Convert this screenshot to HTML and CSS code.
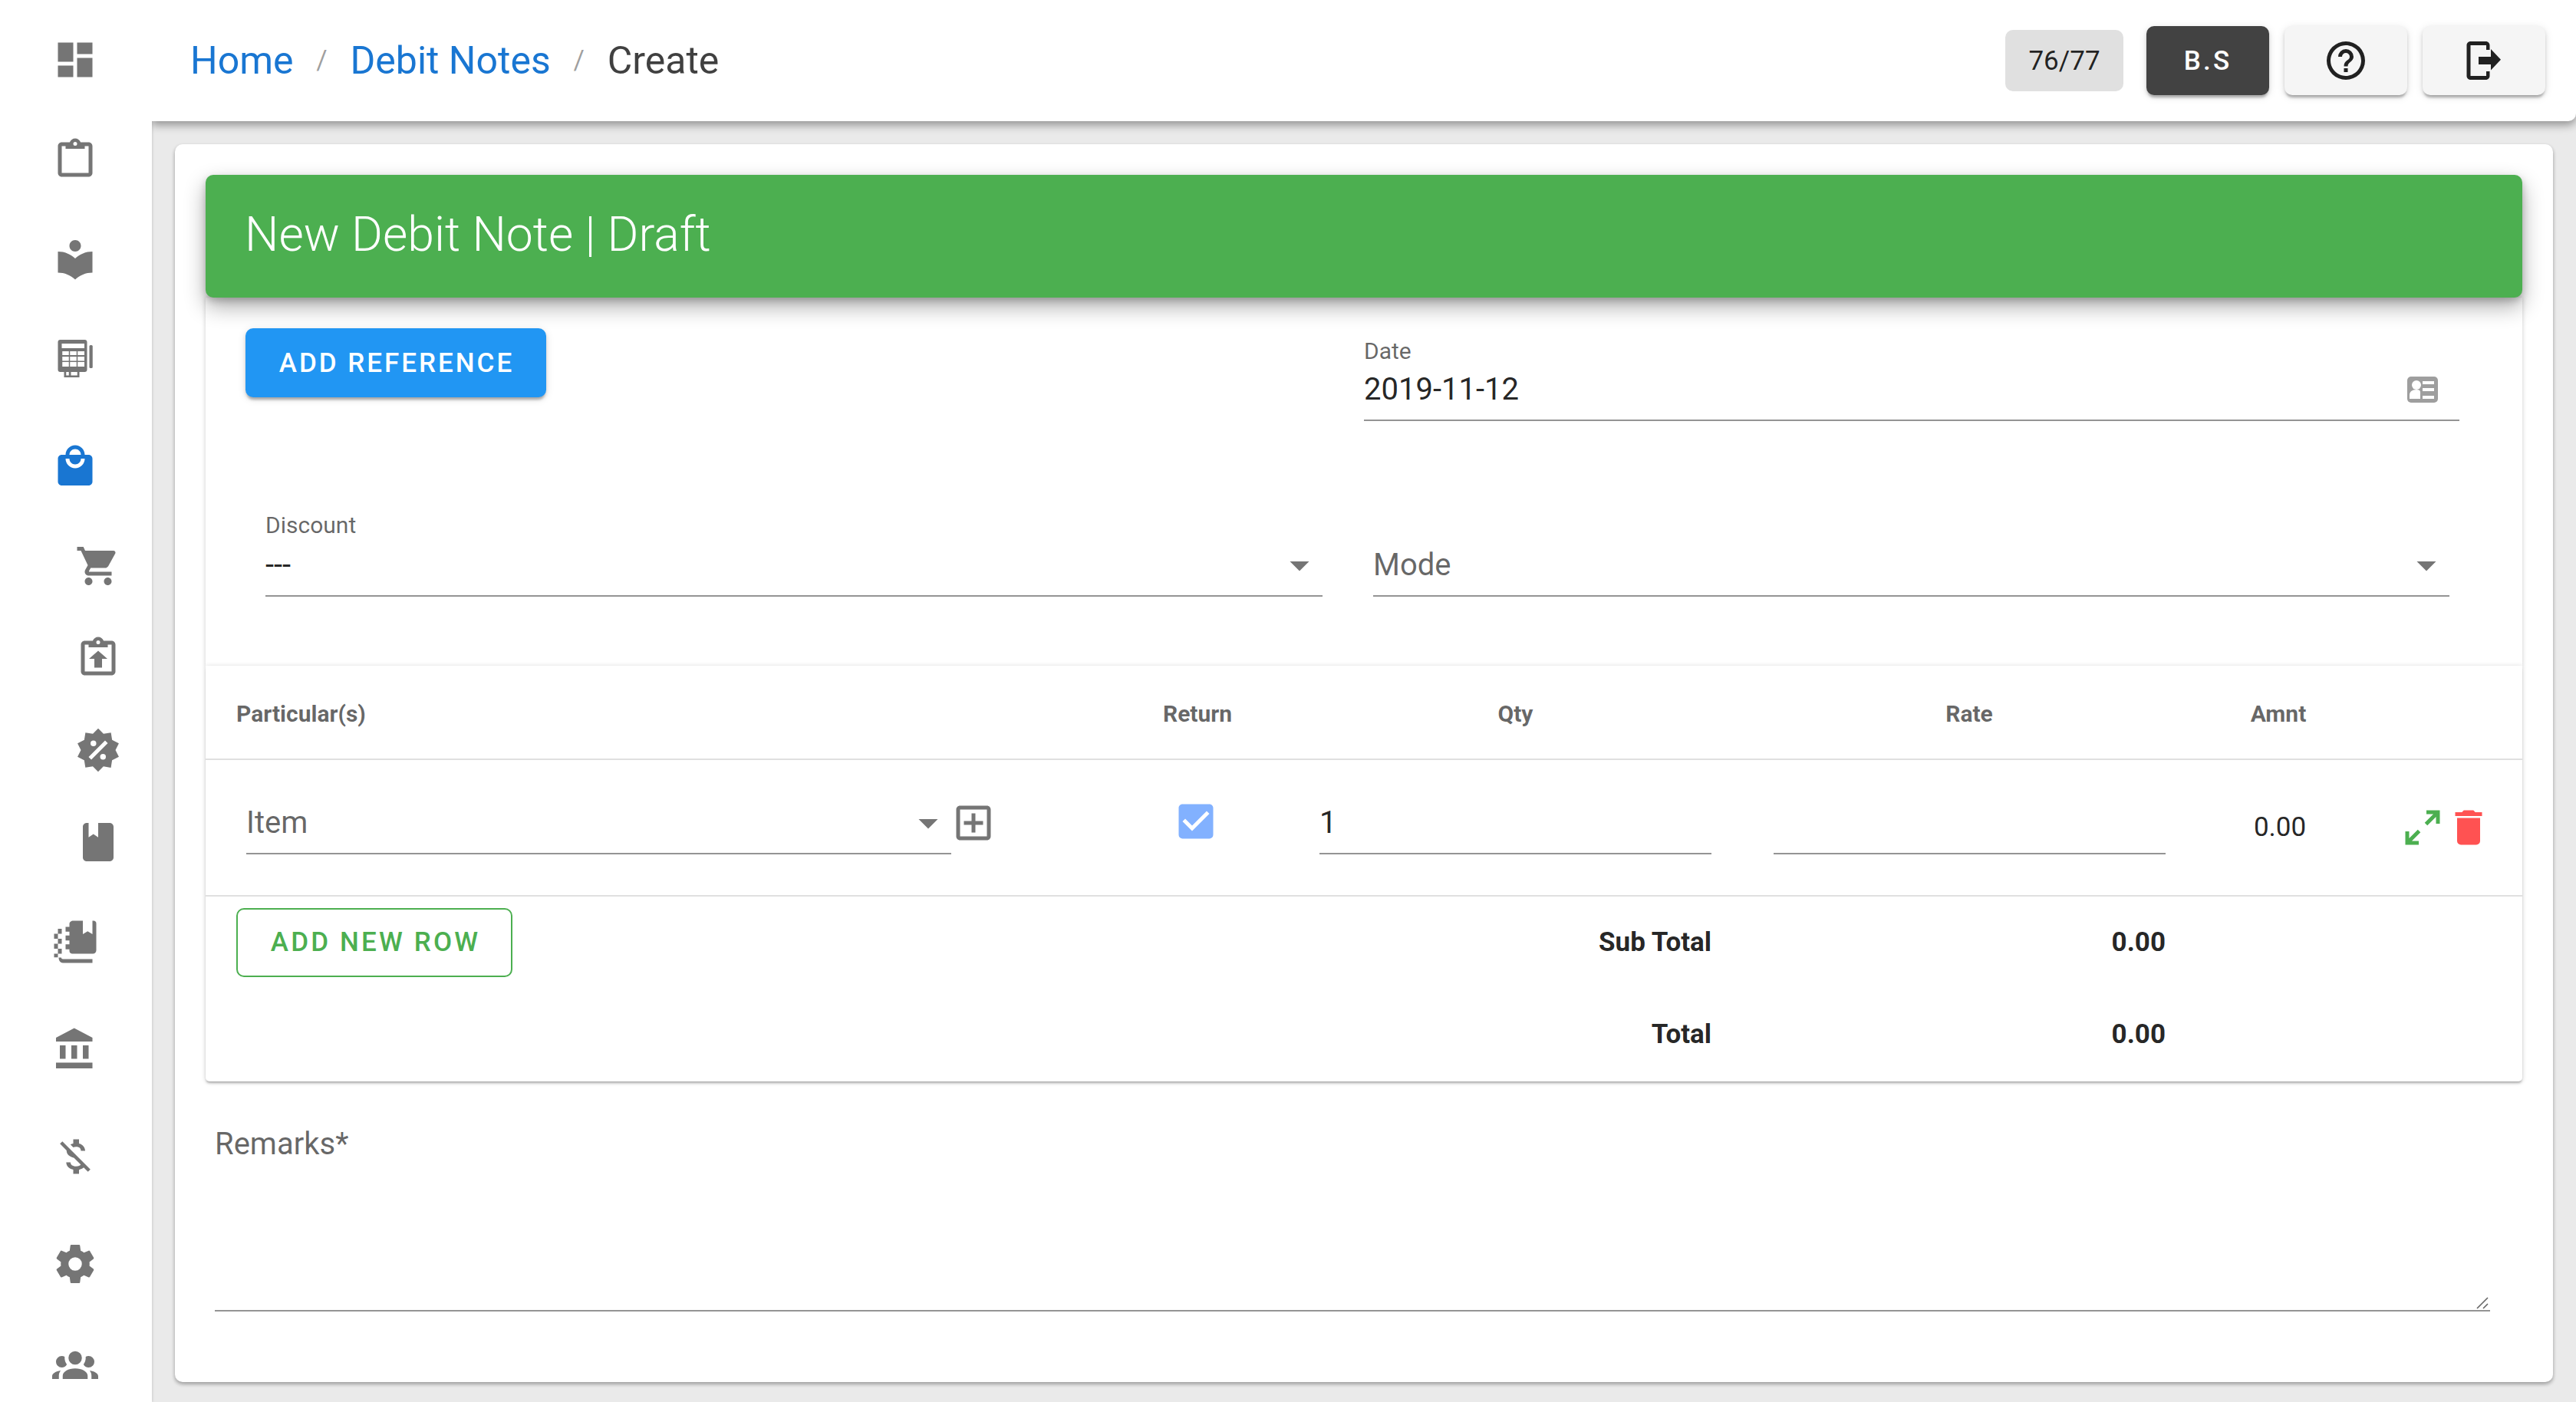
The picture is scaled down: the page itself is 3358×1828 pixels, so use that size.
FILE: index.html
```html
<!DOCTYPE html>
<html lang="en">
<head>
<meta charset="utf-8">
<title>New Debit Note</title>
<link rel="stylesheet" href="styles.css">
</head>
<body>
<div class="app">
  <nav class="sidebar">
    <svg class="ico nav first" viewBox="0 0 24 24"><path d="M3 13h8V3H3v10zm0 8h8v-6H3v6zm10 0h8V11h-8v10zm0-18v6h8V3h-8z"/></svg>
    <svg class="ico nav" viewBox="0 0 24 24"><path fill-rule="evenodd" d="M19 3h-4.18C14.4 1.84 13.3 1 12 1s-2.4.84-2.82 2H5c-1.1 0-2 .9-2 2v14c0 1.1.9 2 2 2h14c1.1 0 2-.9 2-2V5c0-1.1-.9-2-2-2zM12 2.8a1 1 0 1 1 0 2 1 1 0 0 1 0-2zM5 5h2v1.4h10V5h2v14H5z"/></svg>
    <svg class="ico nav" viewBox="0 0 24 24"><path d="M12 11.55C9.64 9.35 6.48 8 3 8v11c3.48 0 6.64 1.35 9 3.55 2.36-2.19 5.52-3.55 9-3.55V8c-3.48 0-6.64 1.35-9 3.55zM12 8c1.66 0 3-1.34 3-3s-1.34-3-3-3-3 1.34-3 3 1.34 3 3 3z"/></svg>
    <svg class="ico nav" viewBox="0 0 24 24"><path fill-rule="evenodd" d="M4.2 2h12.8c.7 0 1.2.5 1.2 1.2v14.4c0 .7-.5 1.2-1.2 1.2h-2.8v2.8H6.200v-2.800H4.200c-.7 0-1.200-.5-1.200-1.200V3.200C3 2.500 3.500 2 4.200 2zM5 4v2.400h11.800V4zM5.300 8v2h3.400V8zM9.300 8v2h3.400V8zM13.300 8v2h3.500V8zM5.300 10.800v2.200h3.400v-2.200zM9.300 10.800v2.200h3.400v-2.200zM13.300 10.800v2.200h3.500v-2.200zM5.300 13.600V16h3.400v-2.400zM9.300 13.600V16h3.400v-2.400zM13.300 13.600V16h3.500v-2.400zM7.300 18.800v1.800h1.400v-1.800zM9.800 18.800v1.800h3.300v-1.800z"/><rect x="19.400" y="4.800" width="1.700" height="12" rx=".6"/></svg>
    <svg class="ico nav wide active" viewBox="0 0 24 24"><path d="M19 6h-2c0-2.760-2.240-5-5-5S7 3.240 7 6H5c-1.100 0-1.990.9-1.990 2L3 20c0 1.100.9 2 2 2h14c1.100 0 2-.9 2-2V8c0-1.100-.9-2-2-2zm-7-3c1.660 0 3 1.340 3 3H9c0-1.660 1.340-3 3-3zm0 10c-2.760 0-5-2.240-5-5h2c0 1.660 1.340 3 3 3s3-1.340 3-3h2c0 2.760-2.240 5-5 5z"/></svg>
    <svg class="ico nav sub" viewBox="0 0 24 24"><path d="M7 18c-1.100 0-1.990.9-1.990 2S5.900 22 7 22s2-.9 2-2-.9-2-2-2zM1 2v2h2l3.600 7.590-1.350 2.450c-.16.28-.25.61-.25.96 0 1.100.9 2 2 2h12v-2H7.420c-.14 0-.25-.11-.25-.25l.03-.12.9-1.630h7.450c.75 0 1.410-.41 1.750-1.030l3.580-6.470c.08-.14.12-.31.12-.48 0-.55-.45-1-1-1H5.210l-.94-2H1zm16 16c-1.100 0-1.990.9-1.990 2s.89 2 1.990 2 2-.9 2-2-.9-2-2-2z"/></svg>
    <svg class="ico nav sub tight" viewBox="0 0 24 24"><path fill-rule="evenodd" d="M19 3h-4.180C14.400 1.840 13.300 1 12 1s-2.400.84-2.820 2H5c-1.100 0-2 .9-2 2v14c0 1.100.9 2 2 2h14c1.100 0 2-.9 2-2V5c0-1.100-.9-2-2-2zM12 2.800a1 1 0 1 1 0 2 1 1 0 0 1 0-2zM5 5h2v1.400h10V5h2v14H5zM12 8.200l-4.800 4.200h2.800V17h4v-4.600h2.800z"/></svg>
    <svg class="ico nav sub tight" viewBox="0 0 24 24"><path d="M18.650 2.850L19.260 6.710L22.770 8.500L21 12L22.780 15.500L19.240 17.290L18.630 21.150L14.740 20.540L11.970 23.300L9.190 20.500L5.330 21.140L4.710 17.250L1.220 15.470L3 11.970L1.230 8.500L4.740 6.690L5.350 2.860L9.220 3.500L12 .69L14.770 3.460L18.650 2.850M9.500 7A1.500 1.500 0 0 0 8 8.500A1.500 1.500 0 0 0 9.500 10A1.500 1.500 0 0 0 11 8.500A1.500 1.500 0 0 0 9.500 7M14.500 14A1.500 1.500 0 0 0 13 15.500A1.500 1.500 0 0 0 14.500 17A1.500 1.500 0 0 0 16 15.500A1.500 1.500 0 0 0 14.500 14M8.410 17L17 8.410L15.590 7L7 15.590L8.410 17Z"/></svg>
    <svg class="ico nav sub tight" viewBox="0 0 24 24"><path d="M18 2h-6v7.500l-2.500-1.700L7 9.500V2H6c-1.100 0-2 .9-2 2v16c0 1.100.9 2 2 2h12c1.100 0 2-.9 2-2V4c0-1.100-.9-2-2-2z"/></svg>
    <svg class="ico nav" viewBox="0 0 24 24"><path d="M11 1h5v7l2.500-1.500L21 8V1h.6c.8 0 1.400.6 1.400 1.400v14c0 1-.7 1.800-1.800 1.800H10.500c-.8 0-1.500-.6-1.500-1.400v-.9H7V13.300h2v-2H7V8.700h2v-2H7V4.200h2V2.600C9 1.700 9.900 1 11 1zM3 5.200h2v2.600H3zM1 7.800h2v2.600H1zM3 10.400h2V13H3zM1 13h2v2.600H1zM3 15.600h2v2.600H3zM1 18.200h2v1.900H1zM3.400 20.200h1.300c.1.500.4.800.9.800H21v2H5.600c-1.300 0-2.200-1.200-2.200-2.800z"/></svg>
    <svg class="ico nav wide" viewBox="0 0 24 24"><path d="M4 10v7h3v-7H4zm6 0v7h3v-7h-3zM2 22h19v-3H2v3zm14-12v7h3v-7h-3zm-4.500-9L2 6v2h19V6l-9.500-5z"/></svg>
    <svg class="ico nav wide" viewBox="0 0 24 24"><path d="M12.500 6.900c1.780 0 2.440.85 2.500 2.100h2.210c-.07-1.720-1.120-3.300-3.210-3.810V3h-3v2.160c-.53.12-1.030.3-1.480.54l1.470 1.470c.41-.17.91-.27 1.510-.27zM5.330 4.060L4.060 5.330 7.500 8.770c0 2.080 1.560 3.210 3.910 3.910l3.510 3.510c-.34.48-1.050.91-2.420.91-2.060 0-2.870-.92-2.980-2.100h-2.200c.12 2.190 1.760 3.420 3.680 3.830V21h3v-2.150c.96-.18 1.820-.55 2.450-1.120l2.220 2.220 1.270-1.270L5.330 4.060z"/></svg>
    <svg class="ico nav wide" viewBox="0 0 24 24"><path d="M12 15.500A3.500 3.500 0 0 1 8.500 12A3.500 3.500 0 0 1 12 8.500A3.500 3.500 0 0 1 15.500 12A3.500 3.500 0 0 1 12 15.500M19.430 12.970C19.470 12.650 19.500 12.330 19.500 12C19.500 11.670 19.470 11.340 19.430 11L21.540 9.370C21.730 9.220 21.780 8.950 21.660 8.730L19.660 5.270C19.540 5.050 19.270 4.960 19.050 5.050L16.560 6.050C16.040 5.660 15.500 5.320 14.870 5.070L14.500 2.420C14.460 2.180 14.250 2 14 2H10C9.750 2 9.540 2.180 9.500 2.420L9.130 5.070C8.500 5.320 7.960 5.660 7.440 6.050L4.950 5.050C4.730 4.960 4.460 5.050 4.340 5.270L2.340 8.730C2.210 8.950 2.270 9.220 2.460 9.370L4.570 11C4.530 11.340 4.500 11.670 4.500 12C4.500 12.330 4.530 12.650 4.570 12.970L2.460 14.630C2.270 14.780 2.210 15.050 2.340 15.270L4.340 18.730C4.460 18.950 4.730 19.030 4.950 18.950L7.440 17.940C7.960 18.340 8.500 18.680 9.130 18.930L9.500 21.580C9.540 21.820 9.750 22 10 22H14C14.250 22 14.460 21.820 14.500 21.580L14.870 18.930C15.500 18.670 16.040 18.340 16.560 17.940L19.050 18.950C19.270 19.030 19.540 18.950 19.660 18.730L21.660 15.270C21.780 15.050 21.730 14.780 21.540 14.630L19.430 12.970Z"/></svg>
    <svg class="ico nav" viewBox="0 0 24 24"><path d="M12 5.500A3.500 3.500 0 0 1 15.500 9A3.500 3.500 0 0 1 12 12.500A3.500 3.500 0 0 1 8.500 9A3.500 3.500 0 0 1 12 5.500M5 8C5.560 8 6.080 8.150 6.530 8.420C6.380 9.850 6.800 11.270 7.660 12.380C7.160 13.340 6.160 14 5 14A3 3 0 0 1 2 11A3 3 0 0 1 5 8M19 8A3 3 0 0 1 22 11A3 3 0 0 1 19 14C17.840 14 16.840 13.340 16.340 12.380C17.200 11.270 17.620 9.850 17.470 8.420C17.920 8.150 18.440 8 19 8M5.500 18.250C5.500 16.180 8.410 14.500 12 14.500C15.590 14.500 18.500 16.180 18.500 18.250V20H5.500V18.250M0 20V18.500C0 17.110 1.890 15.940 4.450 15.600C3.860 16.280 3.500 17.220 3.500 18.250V20H0M24 20H20.500V18.250C20.500 17.220 20.140 16.280 19.550 15.600C22.110 15.940 24 17.110 24 18.500V20Z"/></svg>
  </nav>

  <div class="main">
    <header class="topbar">
      <div class="crumbs">
        <a class="crumb-link">Home</a><span class="crumb-sep">/</span>
        <a class="crumb-link">Debit Notes</a><span class="crumb-sep">/</span>
        <span class="crumb-current">Create</span>
      </div>
      <div class="top-actions">
        <span class="chip">76/77</span>
        <button class="top-btn dark">B.S</button>
        <button class="top-btn light"><svg class="ico black" viewBox="0 0 24 24"><path d="M11 18H13V16H11V18M12 2A10 10 0 0 0 2 12A10 10 0 0 0 12 22A10 10 0 0 0 22 12A10 10 0 0 0 12 2M12 20C7.590 20 4 16.410 4 12C4 7.590 7.590 4 12 4C16.410 4 20 7.590 20 12C20 16.410 16.410 20 12 20M12 6A4 4 0 0 0 8 10H10A2 2 0 0 1 12 8A2 2 0 0 1 14 10C14 12 11 11.750 11 15H13C13 12.750 16 12.500 16 10A4 4 0 0 0 12 6Z"/></svg></button>
        <button class="top-btn light"><svg class="ico black" viewBox="0 0 24 24"><path d="M5 2h8c1.100 0 2 .9 2 2v2.400h-1.800V4H5v16h8.200v-2.400H15V20c0 1.100-.9 2-2 2H5c-1.100 0-2-.9-2-2V4c0-1.100.9-2 2-2z"/><path d="M9.200 10h6.400V6l5.200 5.500-5.200 5.500v-3H9.200z"/></svg></button>
      </div>
    </header>

    <div class="content">
      <section class="page-card">
        <div class="banner">New Debit Note | Draft</div>

        <div class="form-card">
          <div class="form-top">
            <button class="btn-primary">ADD REFERENCE</button>
            <div class="field date-field">
              <div class="field-label">Date</div>
              <div class="field-row">
                <span class="field-value">2019-11-12</span>
                <svg class="id-card" viewBox="0 0 40 34"><rect width="40" height="34" rx="5" fill="#9e9e9e"/><circle cx="12" cy="11" r="6" fill="#fff"/><path d="M3 29v-5c0-4 3-7 9-7s5 3 5 7v5z" fill="#fff"/><path d="M20 6h15v4H20zM20 15h15v4H20zM20 25h15v4H20z" fill="#fff"/></svg>
              </div>
            </div>
          </div>
          <div class="form-selects">
            <div class="field discount-field">
              <div class="field-label">Discount</div>
              <div class="field-row">
                <span class="field-value">---</span>
                <svg class="ico" viewBox="0 0 24 24"><path d="M7 10L12 15L17 10H7Z"/></svg>
              </div>
            </div>
            <div class="field mode-field">
              <div class="field-row">
                <span class="field-value muted">Mode</span>
                <svg class="ico" viewBox="0 0 24 24"><path d="M7 10L12 15L17 10H7Z"/></svg>
              </div>
            </div>
          </div>
        </div>

        <div class="table-card">
          <div class="tr thead">
            <div class="th th-first">Particular(s)</div>
            <div class="th center">Return</div>
            <div class="th center">Qty</div>
            <div class="th center">Rate</div>
            <div class="th center">Amnt</div>
            <div></div>
          </div>
          <div class="tr tbody">
            <div class="td-item">
              <div class="field item-field">
                <div class="field-row">
                  <span class="field-value muted">Item</span>
                  <svg class="ico" viewBox="0 0 24 24"><path d="M7 10L12 15L17 10H7Z"/></svg>
                </div>
              </div>
              <svg class="ico plus" viewBox="0 0 24 24"><path d="M19 3H5C3.890 3 3 3.890 3 5V19C3 20.100 3.900 21 5 21H19C20.100 21 21 20.100 21 19V5C21 3.890 20.100 3 19 3M19 5V19H5V5H19M11 7H13V11H17V13H13V17H11V13H7V11H11V7Z"/></svg>
            </div>
            <div class="td-check">
              <svg class="ico check" viewBox="0 0 24 24"><path d="M10 17L5 12L6.410 10.580L10 14.170L17.590 6.580L19 8M19 3H5C3.890 3 3 3.890 3 5V19A2 2 0 0 0 5 21H19A2 2 0 0 0 21 19V5C21 3.890 20.100 3 19 3Z"/></svg>
            </div>
            <div class="td-input"><div class="field"><div class="field-row"><span class="field-value">1</span></div></div></div>
            <div class="td-input"><div class="field"><div class="field-row"></div></div></div>
            <div class="td-amount">0.00</div>
            <div class="td-actions">
              <svg class="ico green" viewBox="0 0 24 24"><path d="M10 21V19H6.410L10.910 14.500L9.500 13.090L5 17.590V14H3V21H10M14.500 10.910L19 6.410V10H21V3H14V5H17.590L13.090 9.500L14.500 10.910Z"/></svg>
              <svg class="ico red" viewBox="0 0 24 24"><path d="M19 4H15.500L14.500 3H9.500L8.500 4H5V6H19M6 19A2 2 0 0 0 8 21H16A2 2 0 0 0 18 19V7H6V19Z"/></svg>
            </div>
          </div>
          <div class="tr tfoot">
            <div class="foot-btn-cell"><button class="btn-outline">ADD NEW ROW</button></div>
            <div class="foot-label">Sub Total</div>
            <div class="foot-value">0.00</div>
          </div>
          <div class="tr tfoot">
            <div class="foot-btn-cell"></div>
            <div class="foot-label">Total</div>
            <div class="foot-value">0.00</div>
          </div>
        </div>

        <div class="remarks">
          <label class="remarks-label" for="remarks">Remarks*</label>
          <textarea class="remarks-input" id="remarks"></textarea>
          <svg class="grip" viewBox="0 0 17 16"><path d="M1 15L15 1M9 15L15 9"/></svg>
        </div>
      </section>
    </div>
  </div>
</div>
</body>
</html>
```

FILE: styles.css
```css
* { box-sizing: border-box; }
html, body { margin: 0; padding: 0; height: 100%; overflow: hidden; }
body {
  font-family: Roboto, "Liberation Sans", sans-serif;
  color: rgba(0, 0, 0, .87);
  background: #eaeaea;
}
button { font-family: inherit; border: 0; cursor: pointer; }

.app { display: flex; width: 3358px; height: 1828px; overflow: hidden; }

.ico { display: block; width: 60px; height: 60px; flex: none; fill: #757575; }
.ico.black { fill: #212121; }
.ico.green { fill: #4caf50; }
.ico.red { fill: #ff5252; }

/* sidebar */
.sidebar {
  position: relative;
  z-index: 1;
  flex: none;
  width: 198px;
  height: 1828px;
  background: #fff;
  padding: 48px 0 0 67.5px;
  overflow: hidden;
  box-shadow: 1px 0 3px rgba(0, 0, 0, .12);
}
.nav { margin-top: 70px; }
.nav.first { margin-top: 0; }
.nav.wide { margin-top: 80px; }
.nav.sub { margin-left: 30px; }
.nav.tight { margin-top: 60px; }
.nav.active { fill: #1976d2; }

/* top bar */
.main { flex: 1; min-width: 0; display: flex; flex-direction: column; }
.topbar {
  position: relative;
  z-index: 2;
  flex: none;
  height: 158px;
  display: flex;
  align-items: center;
  justify-content: space-between;
  padding: 0 40px 0 50px;
  background: #fff;
  border-bottom-right-radius: 10px;
  box-shadow: 0 5px 12px rgba(0, 0, 0, .38);
  clip-path: inset(0 -30px -40px 0);
}
.crumbs { display: flex; align-items: center; font-size: 50px; line-height: 60px; }
.crumb-link { color: #1976d2; }
.crumb-current { color: rgba(0, 0, 0, .75); }
.crumb-sep { width: 74px; text-align: center; font-size: 35px; color: rgba(0, 0, 0, .38); }
.top-actions { display: flex; align-items: center; gap: 20px; }
.chip {
  width: 154px;
  height: 80px;
  margin-right: 10px;
  display: flex;
  align-items: center;
  justify-content: center;
  font-size: 35px;
  background: #e0e0e0;
  border-radius: 10px;
}
.top-btn {
  width: 160px;
  height: 90px;
  display: flex;
  align-items: center;
  justify-content: center;
  padding: 0;
  border-radius: 10px;
  box-shadow: 0 5px 3px -2px rgba(0, 0, 0, .2), 0 3px 5px rgba(0, 0, 0, .14), 0 2px 12px rgba(0, 0, 0, .1);
}
.top-btn.dark {
  background: #424242;
  color: #fff;
  font-size: 35px;
  font-weight: 500;
  letter-spacing: .09em;
}
.top-btn.light { background: #f5f5f5; }

/* page */
.content { flex: 1; padding: 30px 30px 0; }
.page-card {
  height: 1614px;
  padding: 40px 40px 0;
  background: #fff;
  border-radius: 10px;
  box-shadow: 0 3px 5px rgba(0, 0, 0, .22), 0 2px 5px rgba(0, 0, 0, .14);
}
.banner {
  position: relative;
  z-index: 1;
  height: 160px;
  padding: 0 51px 6px;
  display: flex;
  align-items: center;
  font-size: 62.5px;
  font-weight: 300;
  color: #fff;
  background: #4caf50;
  border-radius: 10px;
  box-shadow: 0 12px 28px rgba(0, 0, 0, .32), 0 4px 10px rgba(0, 0, 0, .2);
}
.form-card {
  height: 480px;
  background: #fff;
  box-shadow: 0 1px 6px rgba(0, 0, 0, .2);
}
.form-top {
  display: flex;
  justify-content: space-between;
  align-items: flex-start;
  padding: 40px 82px 0 52px;
}
.btn-primary {
  width: 392px;
  height: 90px;
  padding: 0 0 0 2px;
  font-size: 35px;
  font-weight: 500;
  letter-spacing: .085em;
  color: #fff;
  background: #2196f3;
  border-radius: 10px;
  box-shadow: 0 5px 3px -2px rgba(0, 0, 0, .2), 0 3px 5px rgba(0, 0, 0, .14), 0 2px 12px rgba(0, 0, 0, .1);
}
.field { border-bottom: 2.5px solid rgba(0, 0, 0, .42); }
.field-label { font-size: 30px; line-height: 36px; margin-bottom: 7px; color: rgba(0, 0, 0, .6); }
.field-row {
  display: flex;
  align-items: center;
  justify-content: space-between;
  height: 50px;
  margin-bottom: 14px;
}
.field-value { font-size: 40px; line-height: 50px; }
.field-value.muted { color: rgba(0, 0, 0, .6); }
.date-field { width: 1428px; margin-top: 12px; padding-right: 28px; }
.id-card { display: block; width: 40px; height: 34px; }
.form-selects {
  display: flex;
  align-items: flex-end;
  padding: 120px 0 0 78px;
}
.discount-field { width: 1378px; }
.discount-field .field-label { margin-top: -2px; margin-bottom: 9px; }
.mode-field { width: 1403px; margin-left: 66px; }

/* table */
.table-card {
  height: 542px;
  background: #fff;
  border-radius: 0 0 5px 5px;
  box-shadow: 0 3px 3px -1px rgba(0, 0, 0, .25), 0 1px 6px rgba(0, 0, 0, .18);
}
.tr { display: grid; grid-template-columns: 1174px 238px 591px 592px 214px 211px; align-items: center; }
.thead { height: 122.5px; padding-top: 4px; border-bottom: 2.5px solid rgba(0, 0, 0, .12); }
.tbody { height: 178px; border-bottom: 2.5px solid rgba(0, 0, 0, .12); }
.tfoot { height: 120px; }
.th { font-size: 30px; font-weight: 700; color: rgba(0, 0, 0, .6); }
.th-first { padding-left: 40px; }
.center { text-align: center; }
.td-item { display: flex; align-items: flex-start; padding: 4px 0 0 53px; }
.item-field { width: 919px; }
.plus { margin: -5px 0 0 -1px; }
.td-check { display: flex; justify-content: center; padding: 0 5px 16px 0; }
.check { fill: #82b1ff; }
.td-input { padding: 4px 40px 0; }
.td-input:nth-child(4) { padding-left: 41px; }
.td-amount { font-size: 35px; text-align: center; padding-left: 4px; }
.td-actions { display: flex; padding-left: 51px; }
.foot-btn-cell { grid-column: 1 / span 2; padding-left: 40px; }
.btn-outline {
  width: 360px;
  height: 90px;
  padding: 0 0 0 3px;
  font-size: 35px;
  font-weight: 500;
  letter-spacing: .09em;
  color: #4caf50;
  background: #fff;
  border: 2.5px solid #4caf50;
  border-radius: 10px;
}
.foot-label, .foot-value { font-size: 35px; font-weight: 700; text-align: right; padding-right: 40px; }

/* remarks */
.remarks { position: relative; margin: 60px 42px 0 12px; }
.remarks-label {
  position: absolute;
  left: 0;
  top: 0;
  font-size: 40px;
  line-height: 44px;
  color: rgba(0, 0, 0, .6);
}
.remarks-input {
  display: block;
  width: 100%;
  height: 240px;
  padding: 0;
  border: 0;
  border-bottom: 2.5px solid rgba(0, 0, 0, .42);
  outline: 0;
  background: transparent;
  font: 40px Roboto, sans-serif;
  resize: none;
}
.grip {
  position: absolute;
  right: 1px;
  bottom: 3px;
  width: 17px;
  height: 16px;
  fill: none;
  stroke: #666;
  stroke-width: 1.6;
}
```
